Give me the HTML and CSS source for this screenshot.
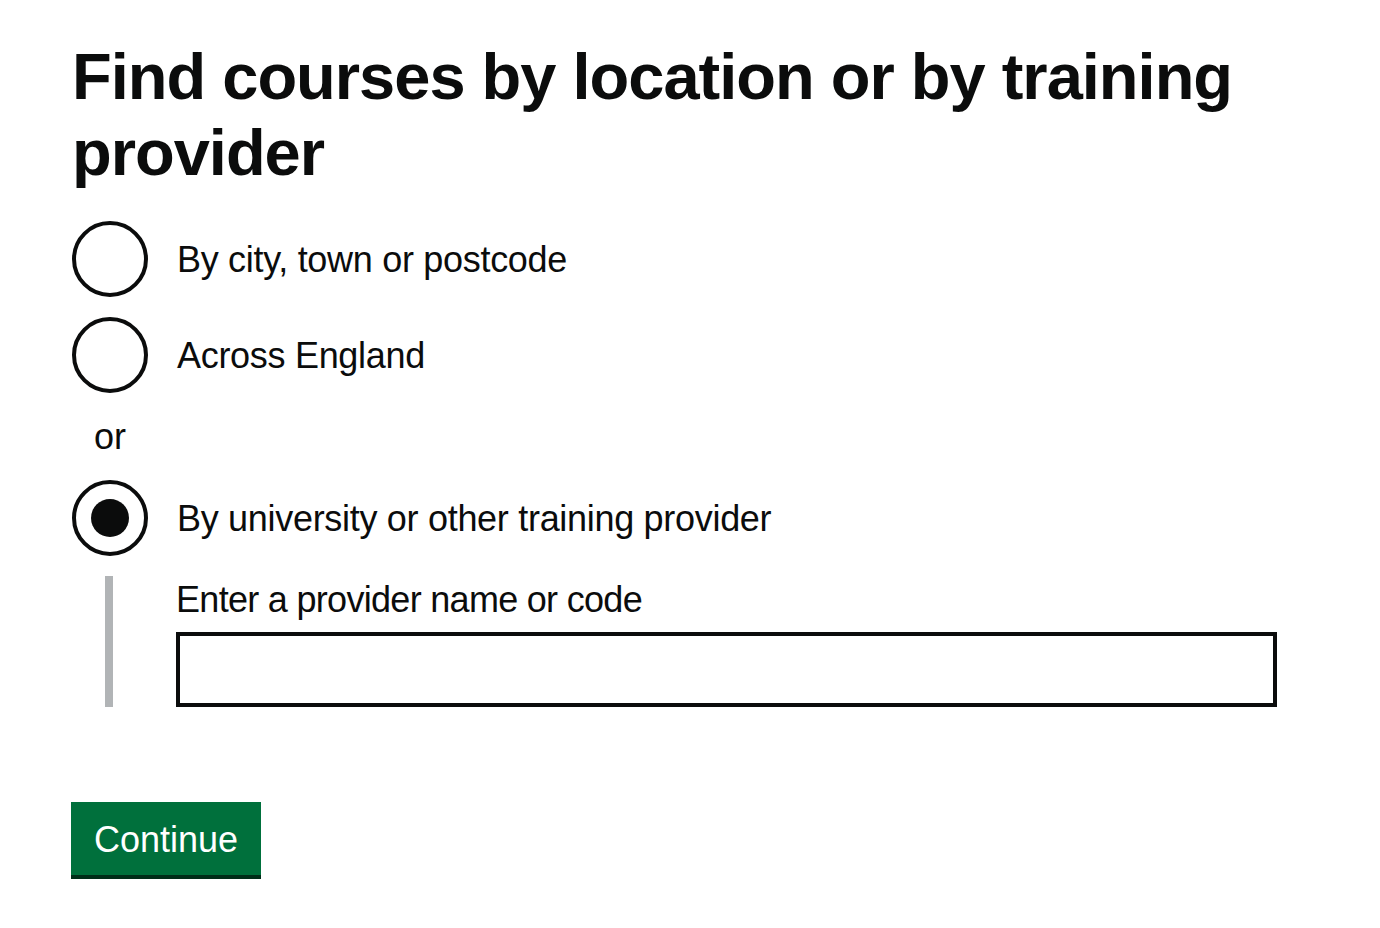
FILE: index.html
```html
<!DOCTYPE html>
<html lang="en">
<head>
<meta charset="utf-8">
<title>Find courses by location or by training provider</title>
<link rel="stylesheet" href="styles.css">
</head>
<body>
<main class="page">
  <form class="form">
    <h1 class="heading">Find courses by location or by training provider</h1>
    <div class="radios">
      <label class="radio">
        <span class="radio-circle"></span>
        <span class="radio-label">By city, town or postcode</span>
      </label>
      <label class="radio">
        <span class="radio-circle"></span>
        <span class="radio-label">Across England</span>
      </label>
      <div class="divider">or</div>
      <label class="radio">
        <span class="radio-circle radio-checked"></span>
        <span class="radio-label">By university or other training provider</span>
      </label>
      <div class="conditional">
        <div class="field-label">Enter a provider name or code</div>
        <div class="input"></div>
      </div>
    </div>
    <button class="button" type="button">Continue</button>
  </form>
</main>
</body>
</html>
```
FILE: styles.css
```css
* { box-sizing: border-box; }
html, body { margin: 0; padding: 0; background: #fff; }
body {
  font-family: "Liberation Sans", Arial, sans-serif;
  color: #0b0c0c;
}
.page { padding: 39px 0 0 72px; }
.heading {
  margin: 0;
  font-size: 65px;
  line-height: 76px;
  font-weight: 700;
  letter-spacing: -1px;
  width: 1240px;
}
.radios { margin-top: 30px; }
.radio {
  display: flex;
  align-items: center;
  height: 76px;
  margin-bottom: 20px;
}
.radio-circle {
  width: 76px;
  height: 76px;
  flex: none;
  border: 4px solid #0b0c0c;
  border-radius: 50%;
  display: flex;
  align-items: center;
  justify-content: center;
}
.radio-checked::after {
  content: "";
  width: 38px;
  height: 38px;
  border-radius: 50%;
  background: #0b0c0c;
}
.radio-label {
  padding-left: 29px;
  font-size: 36px;
  line-height: 76px;
  letter-spacing: -0.3px;
  padding-top: 2px;
}
.divider {
  width: 76px;
  text-align: center;
  font-size: 36px;
  line-height: 48px;
  height: 87px;
  margin-top: -20px;
  padding-top: 20px;
}
.conditional {
  margin-left: 33px;
  border-left: 8px solid #b1b4b6;
  padding-left: 63px;
}
.field-label {
  font-size: 36px;
  line-height: 48px;
  letter-spacing: -0.7px;
  margin-bottom: 8px;
}
.input {
  width: 1101px;
  height: 75px;
  border: 4px solid #0b0c0c;
}
.button {
  margin-top: 95px;
  margin-left: -1px;
  display: block;
  font-family: inherit;
  font-size: 36px;
  line-height: 40px;
  color: #fff;
  background: #00703c;
  border: 0;
  border-bottom: 4px solid #002d18;
  width: 190px;
  height: 77px;
  padding: 2px 0 0;
  text-align: center;
}
```
